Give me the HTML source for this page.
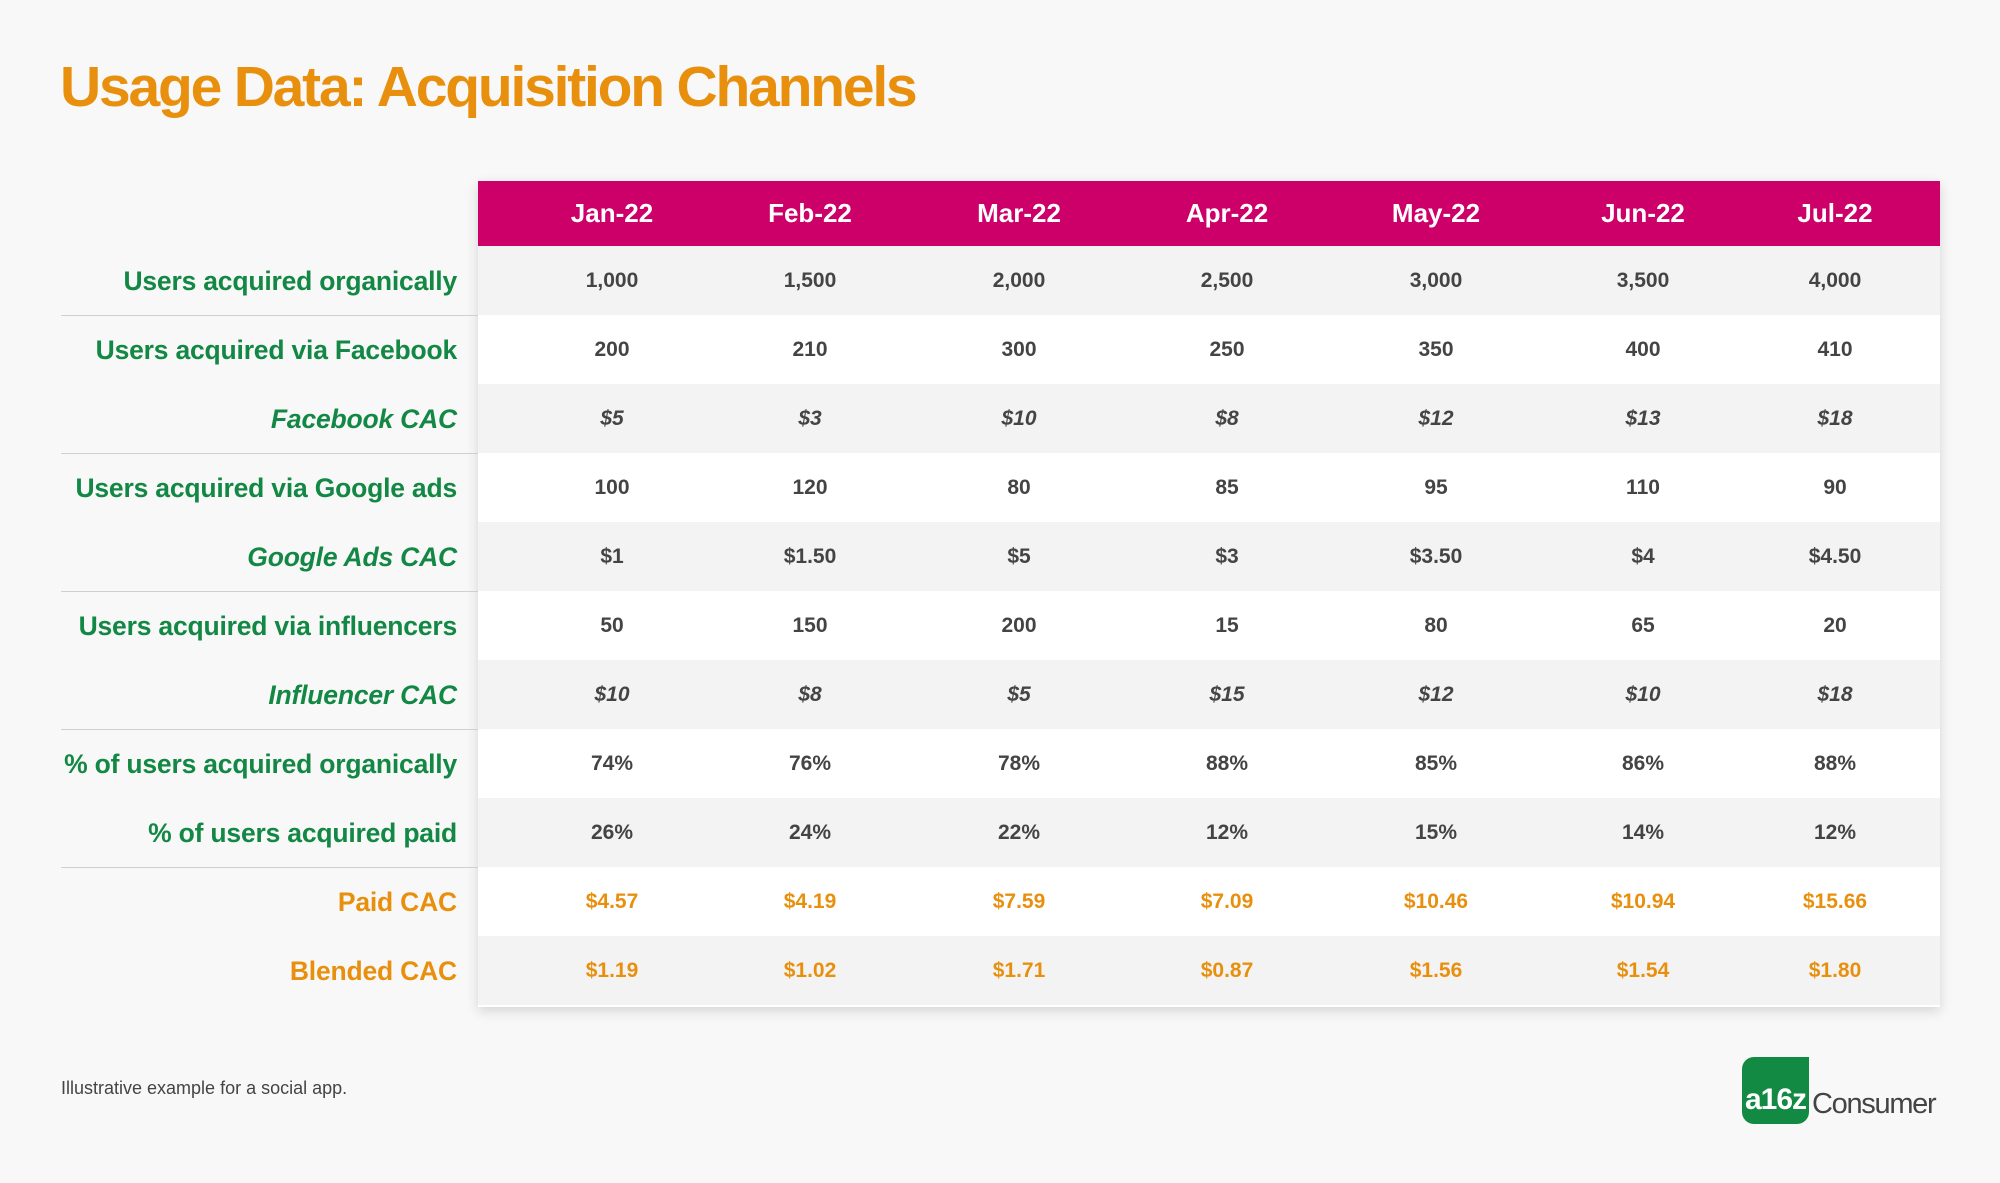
<!DOCTYPE html>
<html><head><style>
body{margin:0;width:2000px;height:1183px;background:#f8f8f8;font-family:"Liberation Sans",sans-serif;position:relative;overflow:hidden}
h1{position:absolute;left:60px;top:54px;margin:0;font-size:57px;font-weight:bold;color:#e8900e;letter-spacing:-2.2px}
.tbl{position:absolute;left:478px;top:181px;width:1462px;height:826px;box-shadow:0 4px 12px rgba(0,0,0,.15);background:#fff}
.hdr{position:absolute;left:478px;top:181px;width:1462px;height:65px;background:#cc0068}
.row{position:absolute;left:478px;width:1462px;height:69px}
.g{background:#f3f3f3}.w{background:#fff}
.cell{position:absolute;transform:translateX(-50%);font-weight:bold;font-size:21px;color:#444;white-space:nowrap}
.h{color:#fff;font-size:26px}
.lab{position:absolute;right:1543px;font-weight:bold;font-size:26.5px;color:#138844;white-space:nowrap;letter-spacing:-0.2px}
.i{font-style:italic}.o{color:#e8900e}
.line{position:absolute;left:61px;width:1879px;height:1px;background:#cfcfcf}
.foot{position:absolute;left:61px;top:1078px;font-size:18px;color:#444}
.logo{position:absolute;left:1742px;top:1057px;width:67px;height:67px;background:#138a44;border-radius:12px 0 12px 12px;color:#fff;font-size:30px;font-weight:bold;box-sizing:border-box;padding-top:26px;text-align:center;letter-spacing:-1px}
.cons{position:absolute;left:1812px;top:1088px;font-size:29px;color:#444;letter-spacing:-1.3px}
</style></head><body>
<h1>Usage Data: Acquisition Channels</h1>
<div class="tbl"></div>
<div class="hdr"></div>
<div id="t"></div>
<div class="foot">Illustrative example for a social app.</div>
<div class="logo">a16z</div><div class="cons">Consumer</div>
<script>
var cols=[612,810,1019,1227,1436,1643,1835];
var hd=["Jan-22","Feb-22","Mar-22","Apr-22","May-22","Jun-22","Jul-22"];
var rows=[
["Users acquired organically","","",["1,000","1,500","2,000","2,500","3,000","3,500","4,000"]],
["Users acquired via Facebook","","",["200","210","300","250","350","400","410"]],
["Facebook CAC","i","i",["$5","$3","$10","$8","$12","$13","$18"]],
["Users acquired via Google ads","","",["100","120","80","85","95","110","90"]],
["Google Ads CAC","i","",["$1","$1.50","$5","$3","$3.50","$4","$4.50"]],
["Users acquired via influencers","","",["50","150","200","15","80","65","20"]],
["Influencer CAC","i","i",["$10","$8","$5","$15","$12","$10","$18"]],
["% of users acquired organically","","",["74%","76%","78%","88%","85%","86%","88%"]],
["% of users acquired paid","","",["26%","24%","22%","12%","15%","14%","12%"]],
["Paid CAC","o","o",["$4.57","$4.19","$7.59","$7.09","$10.46","$10.94","$15.66"]],
["Blended CAC","o","o",["$1.19","$1.02","$1.71","$0.87","$1.56","$1.54","$1.80"]]];
var h="";
hd.forEach(function(x,j){h+='<div class="cell h" style="left:'+cols[j]+'px;top:198px">'+x+'</div>'});
rows.forEach(function(r,i){var top=246+i*69;
h+='<div class="row '+(i%2?'w':'g')+'" style="top:'+top+'px"></div>';
h+='<div class="lab '+r[1]+'" style="top:'+(top+20)+'px">'+r[0]+'</div>';
r[3].forEach(function(v,j){h+='<div class="cell '+r[2]+'" style="left:'+cols[j]+'px;top:'+(top+23)+'px">'+v+'</div>'});
if(i%2==0&&i<10)h+='<div class="line" style="top:'+(top+69)+'px"></div>';});
document.getElementById("t").innerHTML=h;
</script>
</body></html>
